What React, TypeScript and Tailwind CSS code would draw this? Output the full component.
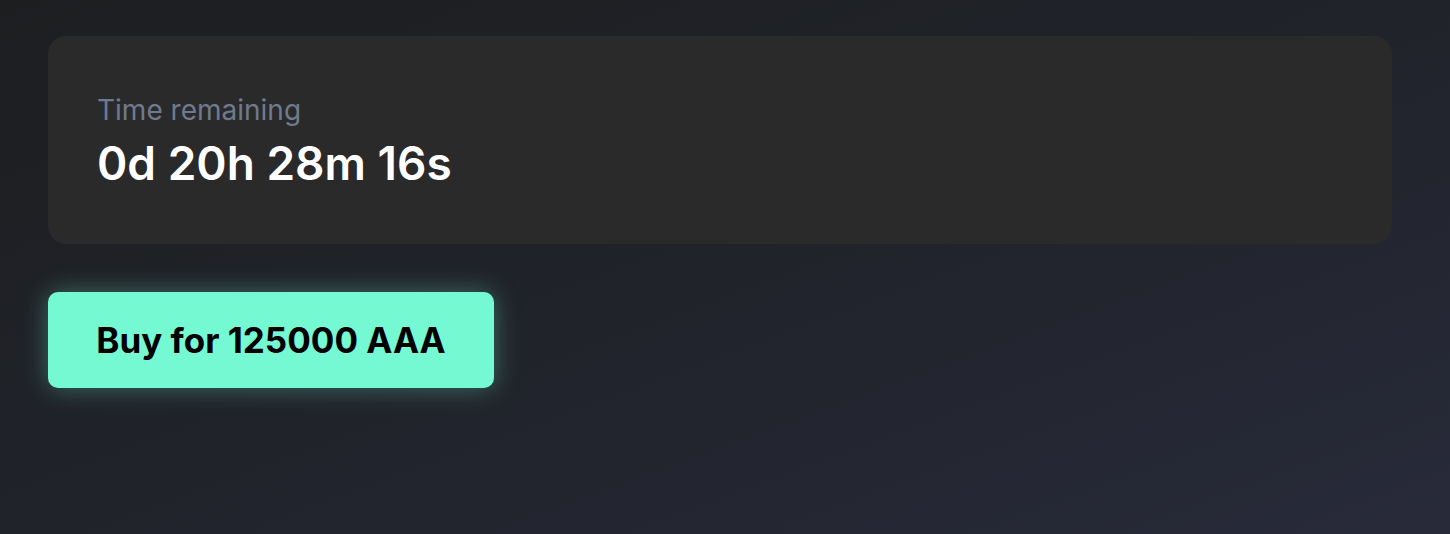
import React from 'react';

const Countdown: React.FC<{ label: string; value: string }> = ({ label, value }) => (
  <div className="flex h-[208px] w-[1344px] flex-col justify-center rounded-[18px] bg-[#2a2a2a] px-[49px]">
    <p className="text-[28px] leading-[40px] text-[#6f7a8e]">{label}</p>
    <p className="mt-[5px] text-[46px] font-semibold leading-[56px] text-white">{value}</p>
  </div>
);

const App: React.FC = () => {
  return (
    <div
      className="min-h-screen w-full bg-gradient-to-br from-[#1d1e20] via-[#20232a] to-[#282a3a] px-12 pt-9"
      style={{ fontFamily: 'Inter, "Noto Sans", sans-serif' }}
    >
      <Countdown label="Time remaining" value="0d 20h 28m 16s" />
      <button className="mt-12 flex h-[96px] w-[446px] items-center justify-center rounded-[10px] bg-[#74f9d3] text-[35px] font-bold text-black shadow-[0_0_26px_rgba(116,249,211,0.35)]">
        Buy for 125000 AAA
      </button>
    </div>
  );
};

export default App;
